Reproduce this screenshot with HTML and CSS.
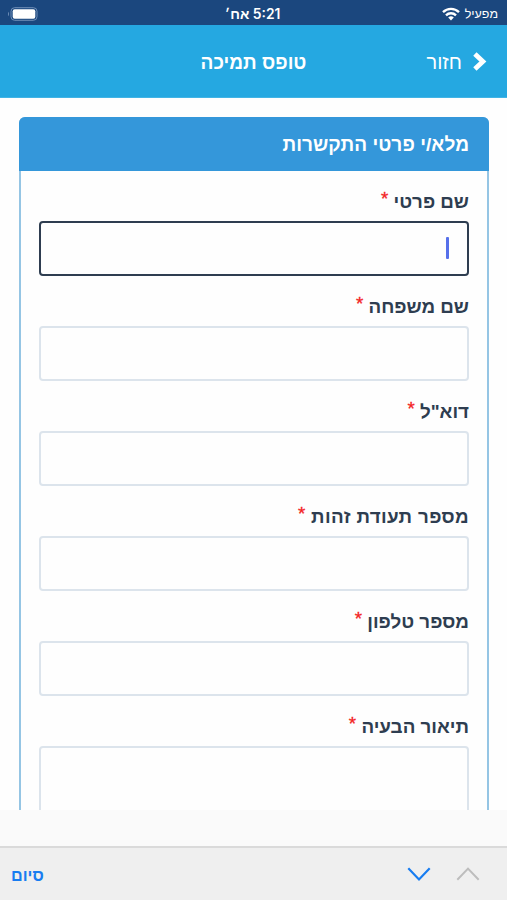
FILE: index.html
```html
<!DOCTYPE html>
<html lang="he" dir="rtl">
<head>
<meta charset="utf-8">
<title>טופס תמיכה</title>
<link rel="stylesheet" href="styles.css">
</head>
<body>
<div class="status">
  <div class="carrier"><span>מפעיל</span>
    <svg class="wifi" width="18" height="14" viewBox="0 0 18 14" fill="none" stroke="#fff" stroke-width="2.4"><path d="M1 5.1a11.6 11.6 0 0 1 16 0M4 8.3a7.2 7.2 0 0 1 10 0"/><path d="M6.2 10.5a4 4 0 0 1 5.6 0L9 13.4z" fill="#fff" stroke="none"/></svg>
  </div>
  <div class="clock">5:21 אח׳</div>
  <div class="power"><svg width="31" height="14" viewBox="0 0 31 14"><rect x="4" y=".7" width="26" height="12.6" rx="3.6" fill="none" stroke="#718fb7"/><rect x="5.7" y="2.3" width="22.6" height="9.4" rx="2" fill="#fff"/><path d="M2 4.8v4.4C.7 8.5.7 5.5 2 4.8z" fill="#718fb7"/></svg></div>
</div>
<header class="nav">
  <div class="back"><svg width="15" height="19" viewBox="0 0 15 19" fill="none" stroke="#fff" stroke-width="4.8"><path d="M2.9 1.9 10.9 9.5 2.9 17.1"/></svg><span>חזור</span></div>
  <h1>טופס תמיכה</h1>
  <div></div>
</header>
<main class="page">
  <form class="card">
    <h2>מלא/י פרטי התקשרות</h2>
    <div class="fields">
      <div class="field"><label>שם פרטי <b>*</b></label><div class="box active"><i class="caret"></i></div></div>
      <div class="field"><label>שם משפחה <b>*</b></label><div class="box"></div></div>
      <div class="field"><label>דוא"ל <b>*</b></label><div class="box"></div></div>
      <div class="field"><label class="wide">מספר תעודת זהות <b>*</b></label><div class="box"></div></div>
      <div class="field"><label>מספר טלפון <b>*</b></label><div class="box"></div></div>
      <div class="field"><label>תיאור הבעיה <b>*</b></label><div class="box area"></div></div>
    </div>
  </form>
</main>
<div class="gap"></div>
<footer class="toolbar">
  <div class="arrows">
    <svg width="24" height="14" viewBox="0 0 24 14" fill="none" stroke="#bdbdbd" stroke-width="2"><path d="M1.3 12.7 12 1.6l10.7 11.1"/></svg>
    <svg width="24" height="14" viewBox="0 0 24 14" fill="none" stroke="#187df1" stroke-width="2.2"><path d="M1.3 1.3 12 12.4 22.7 1.3"/></svg>
  </div>
  <span class="done">סיום</span>
</footer>
</body>
</html>
```
FILE: styles.css
```css
* { box-sizing: border-box; }
body {
  margin: 0;
  height: 900px;
  display: flex;
  flex-direction: column;
  overflow: hidden;
  background: #fefefe;
  font-family: "Liberation Sans", sans-serif;
}
.status {
  height: 25px;
  flex: none;
  display: grid;
  grid-template-columns: 1fr auto 1fr;
  align-items: center;
  padding: 2px 9px 0 7px;
  background: #1b477e;
  color: #fff;
  font-size: 12.5px;
  line-height: 22px;
}
.carrier { display: flex; align-items: center; gap: 5px; }
.clock { font-family: Inter, "Liberation Sans", sans-serif; font-size: 13.8px; font-weight: 600; }
.power { display: flex; justify-content: flex-end; }
.nav {
  height: 73px;
  flex: none;
  display: grid;
  grid-template-columns: 1fr auto 1fr;
  align-items: center;
  padding: 1px 20px 0;
  background: #25a8e1;
  border-bottom: 1px solid #42b4e5;
  color: #fff;
}
.nav h1 { margin: 0; padding-top: 2px; font-size: 19px; font-weight: 700; }
.back { display: flex; align-items: center; gap: 10px; font-size: 20px; }
.back span { padding-top: 1px; }
.page { height: 712px; flex: none; padding: 19px 18px 0 19px; overflow: hidden; }
.card {
  height: 800px;
  border: 2px solid #95c5e4;
  border-radius: 6px;
}
.card h2 {
  height: 54px;
  margin: -2px -2px 0;
  padding: 0 20px;
  border-radius: 6px 6px 0 0;
  background: #3497da;
  color: #fff;
  font-size: 19px;
  font-weight: 700;
  letter-spacing: .07px;
  line-height: 55px;
}
.fields { padding: 15px 18px; }
.field { height: 105px; }
.field label {
  display: block;
  height: 35px;
  color: #2e3d50;
  font-size: 18.8px;
  font-weight: 700;
  line-height: 32px;
}
.field .wide { letter-spacing: .35px; }
.field b {
  display: inline-block;
  line-height: 1;
  transform: translateY(-3px);
  color: #f3221e;
  font-weight: 400;
  -webkit-text-stroke: .3px #f3221e;
}
.box {
  height: 55px;
  display: flex;
  align-items: center;
  padding: 0 18px 2px;
  border: 2px solid #dce4ec;
  border-radius: 4px;
}
.box.active { border-color: #2e3d50; }
.box.area { height: 120px; }
.caret { width: 3px; height: 22px; border-radius: 1px; background: #5670ea; }
.gap { height: 36px; flex: none; background: #fafafa; }
.toolbar {
  height: 54px;
  flex: none;
  display: flex;
  align-items: center;
  justify-content: space-between;
  padding: 0 27px 0 11px;
  border-top: 2px solid #dadada;
  background: #efefef;
}
.arrows { display: flex; gap: 25px; }
.done { padding-top: 2px; color: #187df1; font-size: 16.2px; font-weight: 700; }
```
